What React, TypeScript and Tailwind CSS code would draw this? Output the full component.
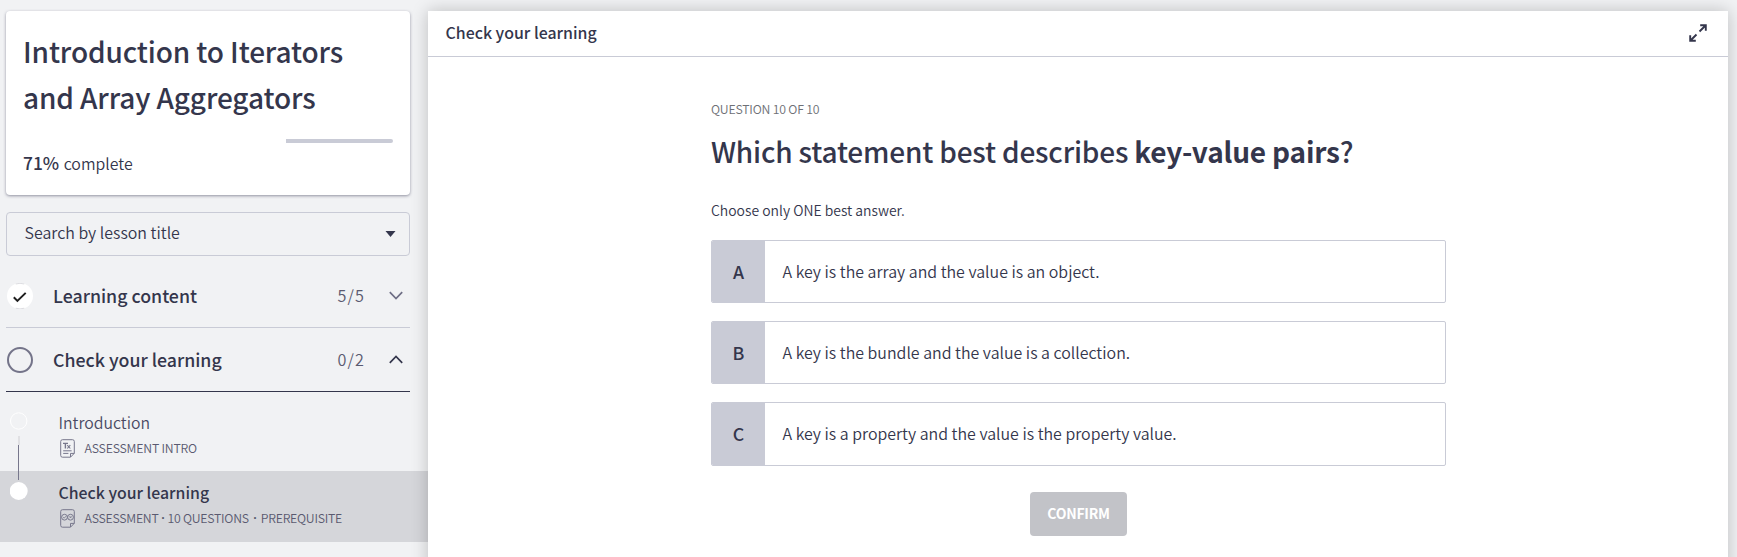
import type { ReactNode } from "react";

function Chevron({ up = false }: { up?: boolean }) {
  return (
    <svg
      width="14"
      height="9"
      viewBox="0 0 14 9"
      fill="none"
      strokeWidth="1.7"
      className={up ? "stroke-[#34364c]" : "stroke-[#6e6e85]"}
    >
      <path d={up ? "M0.8 7.8 L7 1.4 L13.2 7.8" : "M0.8 1.2 L7 7.6 L13.2 1.2"} />
    </svg>
  );
}

function PageIcon({ children }: { children: ReactNode }) {
  return (
    <svg width="15" height="19" viewBox="0 0 15 19" fill="none" stroke="#77778c" strokeWidth="1">
      <path d="M2.5 .7h10a1.8 1.8 0 0 1 1.8 1.8v11.8l-3.8 3.9h-8A1.8 1.8 0 0 1 .7 16.4V2.5A1.8 1.8 0 0 1 2.5 .7z" />
      <path d="M10.5 18v-3.6h3.7" />
      {children}
    </svg>
  );
}

function IntroIcon() {
  return (
    <PageIcon>
      <path d="M3 4.4h5M5.4 4.4v5" strokeWidth="1.4" />
      <path d="M7.3 6.2l3 3.3M10.3 6.2l-3 3.3" strokeWidth="1.1" />
      <path d="M3.2 11.8h8.4M3.2 14.4h5.2" />
    </PageIcon>
  );
}

function AssessmentIcon() {
  return (
    <PageIcon>
      <circle cx="4.5" cy="8.2" r="2.9" />
      <circle cx="10.5" cy="8.2" r="2.9" />
      <path d="M3.2 8.2l1 1 1.8-2M9.5 7.2l2 2M11.5 7.2l-2 2" strokeWidth=".9" />
    </PageIcon>
  );
}

function Section({
  title,
  count,
  open = false,
  done = false,
}: {
  title: string;
  count: string;
  open?: boolean;
  done?: boolean;
}) {
  return (
    <div
      className={`flex h-16 shrink-0 items-center border-b pl-px ${open ? "border-[#34364c]" : "border-[#c9cbd6]"}`}
    >
      {done ? (
        <svg width="26" height="26" viewBox="0 0 26 26" fill="none">
          <circle cx="13" cy="13" r="13" fill="#fff" />
          <path d="M8.8 1a13 13 0 0 1 8.4 0M8.8 25.2a13 13 0 0 0 8.4 0" stroke="#cfcfd4" strokeWidth=".7" />
          <path d="M6.8 14.2l3.6 3.7 8.3-8" stroke="#1f1f1f" strokeWidth="2" />
        </svg>
      ) : (
        <span className="size-[26px] rounded-full border-2 border-[#747489]" />
      )}
      <span className="ml-5 flex-1 pb-px text-[17.75px] font-medium leading-7">{title}</span>
      <span className="text-[16.2px] font-[350] tracking-[1.1px] text-[#5a5a70]">{count}</span>
      <span className="ml-6 mr-[7px]">
        <Chevron up={open} />
      </span>
    </div>
  );
}

function Option({ letter, text }: { letter: string; text: string }) {
  return (
    <div className="flex h-[63.2px] overflow-hidden rounded-xs border border-[#c9cbd6]">
      <span className="flex w-[53px] items-center justify-center bg-[#c9cbd6] pb-px text-[17.8px] font-medium">
        {letter}
      </span>
      <span className="flex items-center pl-[17.5px] text-[15.95px] font-[350]">{text}</span>
    </div>
  );
}

export default function App() {
  return (
    <div className="flex h-[557px] w-[1737px] overflow-hidden bg-[#f1f2f4] pt-[11px] font-['Noto_Sans_CJK_SC','Source_Sans_Pro',sans-serif] text-[#34364c]">
      <aside className="flex w-[428px] shrink-0 flex-col">
        <div className="ml-1.5 flex w-[404px] flex-col">
          <div className="h-[184px] rounded bg-white px-[17px] pt-[17px] shadow-[0_1px_3px_rgba(50,50,77,0.5)]">
            <h1 className="text-[28px] font-medium leading-[46px] tracking-[-0.12px]">
              Introduction to Iterators
              <br />
              and Array Aggregators
            </h1>
            <div className="mt-[19px] flex h-1 justify-end">
              <div className="w-[107px] rounded-r-full bg-[#c9cbd6]" />
            </div>
            <p className="mt-2 text-[15.9px] font-[350] leading-6">
              <span className="mr-px text-[17.4px] font-medium">71%</span> complete
            </p>
          </div>
          <div className="mt-[17px] flex h-11 items-center justify-between rounded border border-[#c9cbd6] pl-[17.5px] pr-[13px] text-[15.95px] font-[350]">
            <span className="pb-0.5">Search by lesson title</span>
            <svg width="11" height="6" viewBox="0 0 11 6" fill="#34364c">
              <path d="M.5 0h10L5.5 6z" />
            </svg>
          </div>
          <div className="mt-2 flex flex-col">
            <Section title="Learning content" count="5/5" done />
            <Section title="Check your learning" count="0/2" open />
          </div>
        </div>

        <div className="relative mt-[9px]">
          <div className="flex h-[70px] flex-col pl-[58.5px] pt-2">
            <span className="text-[15.8px] font-[350] leading-7 text-[#4a4a63]">Introduction</span>
            <span className="mt-px flex items-center gap-[10px] pl-px text-[12.3px] font-[350] leading-5 tracking-[-0.2px] text-[#5a5a70]">
              <IntroIcon />
              ASSESSMENT INTRO
            </span>
          </div>
          <div className="flex h-[71px] flex-col bg-[#d5d6da] pl-[58.5px] pt-2">
            <span className="text-[15.85px] font-medium leading-7">Check your learning</span>
            <span className="mt-px flex items-center pl-px text-[12.3px] font-[350] leading-5 tracking-[-0.25px] text-[#5a5a70]">
              <span className="mr-[10px]">
                <AssessmentIcon />
              </span>
              <span>ASSESSMENT</span>
              <span className="w-[9px] text-center font-['Open_Sans',sans-serif] font-bold">·</span>
              <span>10 QUESTIONS</span>
              <span className="w-[12px] text-center font-['Open_Sans',sans-serif] font-bold">·</span>
              <span>PREREQUISITE</span>
            </span>
          </div>
          <svg className="absolute left-2.5 top-0" width="18" height="110" viewBox="0 0 18 110" fill="none">
            <circle cx="8.7" cy="20" r="8.2" stroke="#fff" />
            <path d="M9 35v9" stroke="#e0e0e3" strokeWidth="2" />
            <path d="M8.5 44v35" stroke="#77778c" />
            <circle cx="8.7" cy="90" r="9" fill="#fff" />
          </svg>
        </div>
      </aside>

      <main className="relative h-[560px] w-[1300px] shrink-0 bg-white shadow-[0_0_16px_rgba(0,0,0,0.22)]">
        <header className="flex h-[46px] items-center justify-between border-b border-[#c9cbd6] pl-[17.5px] pr-[21px]">
          <span className="pb-0.5 text-[15.92px] font-medium">Check your learning</span>
          <svg className="mb-px" width="18" height="18" viewBox="0 0 18 18" fill="none" stroke="#34364c" strokeWidth="1.9">
            <path d="M11.2 1.2h5.6v5.6M16.5 1.5l-6 6M1.2 11.2v5.6h5.6M1.5 16.5l6-6" />
          </svg>
        </header>
        <div className="ml-[283px] flex w-[735px] flex-col">
          <p className="mt-[42px] text-[12.3px] font-[350] leading-5 tracking-[-0.2px] text-[#6e7076]">
            QUESTION 10 OF 10
          </p>
          <h2 className="mt-[11px] text-[28px] font-medium leading-[42px] tracking-[-0.18px]">
            Which statement best describes <strong className="font-bold">key-value pairs</strong>?
          </h2>
          <p className="mt-[26px] text-[13.95px] font-[350] leading-6">Choose only ONE best answer.</p>
          <div className="mt-[18px] flex flex-col gap-[18px]">
            <Option letter="A" text="A key is the array and the value is an object." />
            <Option letter="B" text="A key is the bundle and the value is a collection." />
            <Option letter="C" text="A key is a property and the value is the property value." />
          </div>
          <button className="mt-[26.4px] h-11 w-[97px] self-center rounded bg-[#c2c3c8] text-[14px] font-bold tracking-[-0.25px] text-white">
            CONFIRM
          </button>
        </div>
      </main>
    </div>
  );
}
